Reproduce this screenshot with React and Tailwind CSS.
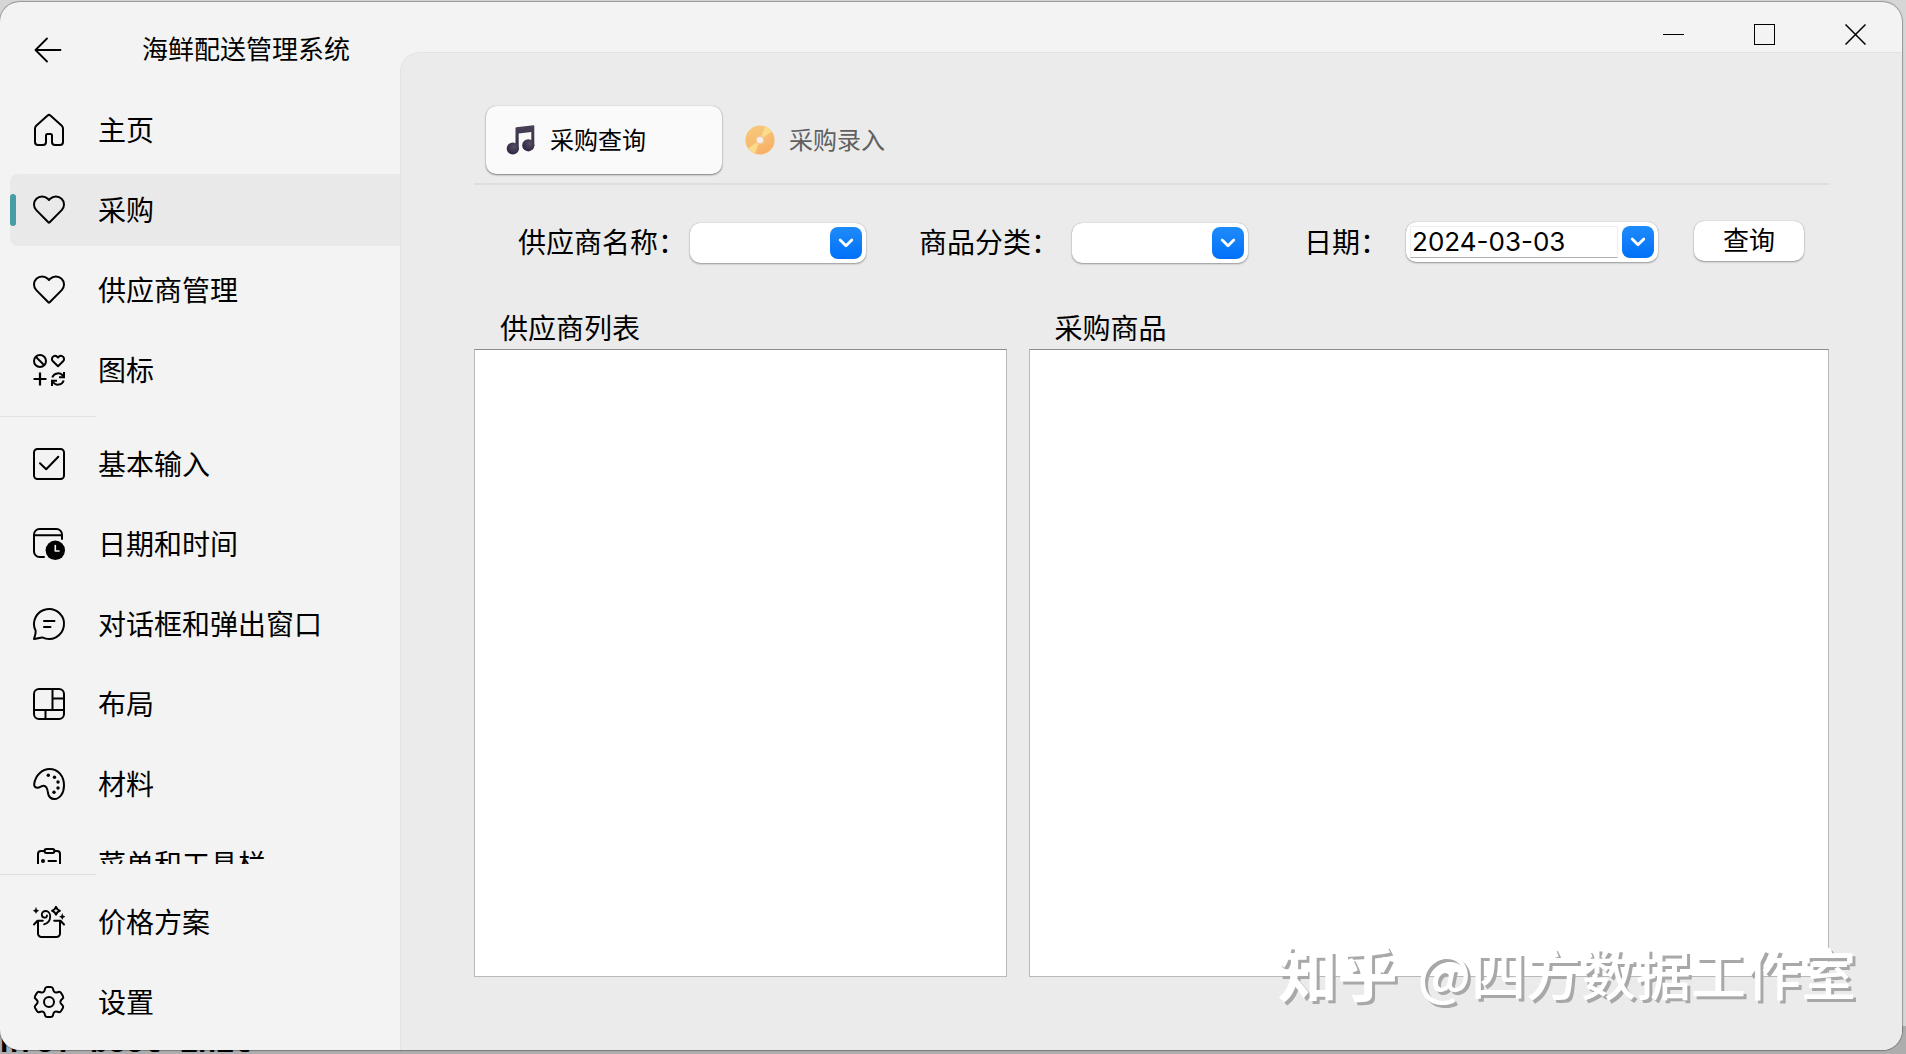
import React from "react";

const GEAR_PATH = (() => {
  const tooth = [
    [-4.6, -10.4],
    [-3.6, -15],
    [3.6, -15],
    [4.6, -10.4],
  ];
  const pts = [];
  for (let i = 0; i < 6; i++) {
    const a = (i * Math.PI) / 3;
    for (const [x, y] of tooth) {
      pts.push([
        16 + x * Math.cos(a) - y * Math.sin(a),
        16 + x * Math.sin(a) + y * Math.cos(a),
      ]);
    }
  }
  const toward = (p, q, r) => {
    const d = Math.hypot(q[0] - p[0], q[1] - p[1]);
    const t = Math.min(r, d / 2) / d;
    return `${(p[0] + (q[0] - p[0]) * t).toFixed(2)} ${(p[1] + (q[1] - p[1]) * t).toFixed(2)}`;
  };
  return (
    pts
      .map((p, i) => {
        const prev = pts[(i + pts.length - 1) % pts.length];
        const next = pts[(i + 1) % pts.length];
        return `${i ? "L" : "M"}${toward(p, prev, 1.8)}Q${p[0].toFixed(2)} ${p[1].toFixed(2)} ${toward(p, next, 1.8)}`;
      })
      .join("") + "Z"
  );
})();

function Icon({ children }) {
  return (
    <svg
      viewBox="0 0 32 32"
      className="size-8 shrink-0 overflow-visible"
      fill="none"
      stroke="black"
      strokeWidth="2"
      strokeLinecap="round"
      strokeLinejoin="round"
      aria-hidden="true"
    >
      {children}
    </svg>
  );
}

const HomeIcon = () => (
  <Icon>
    <path d="M14.6 1.6 3.2 11.7A4 4 0 0 0 2 14.7V28a3 3 0 0 0 3 3h5a3 3 0 0 0 3-3v-6.5a1.5 1.5 0 0 1 1.5-1.5h3a1.5 1.5 0 0 1 1.5 1.5V28a3 3 0 0 0 3 3h5a3 3 0 0 0 3-3V14.7a4 4 0 0 0-1.2-3L17.4 1.6a2 2 0 0 0-2.8 0Z" />
  </Icon>
);
const HeartIcon = () => (
  <Icon>
    <path d="m16 6-1.2-1.2A8 8 0 0 0 3.3 16.1l12 12.2a1 1 0 0 0 1.4 0l12-12.2A8 8 0 0 0 17.2 4.8L16 6Z" />
  </Icon>
);
const GlyphsIcon = () => (
  <Icon>
    <circle cx="7" cy="7" r="6" />
    <path d="m3 3 8 8" />
    <path d="m25 3.6-.8-.8a3.1 3.1 0 0 0-4.3 4.5L25 12.2l5.1-4.900a3.100 3.100 0 0 0-4.300-4.500L25 3.600Z" />
    <path d="M7 18.500v13M.5 25h13" strokeLinecap="butt" strokeWidth="2.200" />
    <path d="M19.300 23.500a6 6 0 0 1 10.700-1.500M30.700 26.500A6 6 0 0 1 20 28" strokeLinecap="butt" />
    <path d="M31 18v5.200h-5M19 32v-5.200h5" strokeLinecap="butt" strokeLinejoin="miter" />
  </Icon>
);
const CheckBoxIcon = () => (
  <Icon>
    <rect x="1" y="1" width="30" height="30" rx="3.500" />
    <path d="m7 15.200 6.200 6L25.300 8.800" />
  </Icon>
);
const CalendarIcon = () => (
  <Icon>
    <path d="M29 11V6.500A5.500 5.500 0 0 0 23.500 1h-17A5.500 5.500 0 0 0 1 6.500v17A5.500 5.500 0 0 0 6.500 29H11M1.500 7.300h27" />
    <circle cx="22.300" cy="22.300" r="9.700" fill="black" stroke="none" />
    <path d="M22.300 17.500V23H26" stroke="#f3f3f3" strokeWidth="1.600" />
  </Icon>
);
const ChatIcon = () => (
  <Icon>
    <path d="M2.700 22.900A15 15 0 1 1 9.300 29.400C6.500 29.900 3.800 30.500 1 31c.9-2.700 1.900-5.400 1.700-8.100ZM11 13h10.500M11 19h6.500" />
  </Icon>
);
const LayoutIcon = () => (
  <Icon>
    <rect x="1" y="1" width="30" height="30" rx="5" />
    <path d="M19.500 1v21M1 22h30M12.500 22v9M19.500 10.500H31" />
  </Icon>
);
const PaletteIcon = () => (
  <Icon>
    <path d="M1.200 16C2.400 6.500 10 1 16.500 1 25 1 31 8 31 17.500 31 25.500 26.500 31 21.500 31c-4 0-6-2.600-6.500-6-.5-4.500-1.500-7.200-4.500-7.200-2 0-3.500 2-6 2-2.200 0-3.500-1.500-3.300-3.800Z" />
    <g fill="black" stroke="none">
      <circle cx="15.300" cy="7.300" r="1.700" />
      <circle cx="21.500" cy="9.300" r="1.700" />
      <circle cx="25" cy="14" r="1.700" />
      <circle cx="25" cy="20" r="1.700" />
      <circle cx="21" cy="24.300" r="1.700" />
    </g>
  </Icon>
);
const ClipboardIcon = () => (
  <Icon>
    <rect x="11.500" y="1" width="10" height="4" rx="2" />
    <path d="M11.500 3H8a3 3 0 0 0-3 3v22a3 3 0 0 0 3 3h16a3 3 0 0 0 3-3V6a3 3 0 0 0-3-3h-2.500M15.500 13H23M15.500 22H23" />
    <circle cx="10" cy="13" r="2" fill="black" stroke="none" />
    <circle cx="10" cy="22" r="2" fill="black" stroke="none" />
  </Icon>
);
const GiftIcon = () => (
  <Icon>
    <path d="M5 16v11.500A3.500 3.500 0 0 0 8.500 31h15a3.500 3.500 0 0 0 3.500-3.500V16M1 18.500l3.500-3.800h5.300M31 18.500l-3.500-3.800h-6.300" />
    <path d="M11 18.300c3.600-1 6.200-4 6.200-7.800 0-3.300-1.900-5.500-4.500-5.500-2.200 0-3.900 1.500-3.900 3.600 0 1.800 1.200 3 2.800 3 1.400 0 2.400-.9 2.400-2.200" strokeWidth="1.800" />
    <path d="M23 .9c.7 2.200 1.600 3.100 3.800 3.900-2.200.7-3.100 1.600-3.800 3.800-.8-2.200-1.700-3.100-3.900-3.800C21.300 4 22.200 3.100 23 .9Z" />
    <path d="M3 2c.5 1.700 1 2.200 2.700 2.700C4 5.200 3.500 5.700 3 7.400 2.500 5.700 2 5.200.3 4.700 2 4.200 2.500 3.700 3 2ZM29.300 8c.4 1.700 1 2.200 2.700 2.700-1.700.5-2.300 1-2.700 2.700-.5-1.700-1-2.200-2.700-2.700 1.700-.5 2.200-1 2.700-2.700Z" fill="black" strokeWidth=".5" />
  </Icon>
);
const GearIcon = () => (
  <Icon>
    <path d={GEAR_PATH} />
    <circle cx="16" cy="16" r="5" />
  </Icon>
);

const MusicIcon = () => (
  <svg viewBox="0 0 30 30" className="size-[30px] shrink-0" aria-hidden="true">
    <defs>
      <linearGradient id="note" x1="0" y1="0" x2="0" y2="1">
        <stop offset="0" stopColor="#4b4058" />
        <stop offset="1" stopColor="#332c40" />
      </linearGradient>
      <radialGradient id="noteHead" cx=".6" cy=".35" r=".7">
        <stop offset="0" stopColor="#555061" />
        <stop offset="1" stopColor="#2d2142" />
      </radialGradient>
    </defs>
    <path d="M9.500 3.200a1 1 0 0 1 .9-1L27.400.2a.8.8 0 0 1 .9.8V21h-3V7l-12.600 1.600V25h-3.200Z" fill="url(#note)" />
    <circle cx="6.800" cy="23.500" r="6.100" fill="url(#noteHead)" />
    <circle cx="22.300" cy="20.300" r="6.100" fill="url(#noteHead)" />
  </svg>
);
const DiscIcon = () => (
  <svg viewBox="0 0 30 30" className="size-[30px] shrink-0" aria-hidden="true">
    <defs>
      <linearGradient id="disc" x1="0" y1="0" x2=".4" y2="1">
        <stop offset="0" stopColor="#f7cb7c" />
        <stop offset="1" stopColor="#f8b268" />
      </linearGradient>
    </defs>
    <circle cx="15" cy="15" r="14.600" fill="url(#disc)" />
    <path d="M15 15 20 1.300A14.600 14.600 0 0 1 27 6.500ZM15 15 3 23.500a14.600 14.600 0 0 0 7 5.300Z" fill="#fadb8c" />
    <circle cx="15" cy="15" r="4.500" fill="#f4c79a" />
    <circle cx="15" cy="15" r="3" fill="#f3f0ee" />
  </svg>
);

function NavItem({ icon: I, label, active }) {
  return (
    <a
      href="#"
      aria-current={active ? "page" : undefined}
      className={
        "relative ml-2.5 flex h-[72px] shrink-0 items-center gap-[33px] pl-[23px] text-[28px] leading-10 " +
        (active ? "rounded-l-lg bg-[#e9e9e9]" : "")
      }
    >
      {active && <span className="absolute top-5 left-0 h-8 w-1.5 rounded-full bg-[#479da6]" />}
      <I />
      <span className="pb-0.5 whitespace-nowrap">{label}</span>
    </a>
  );
}

function Chevron() {
  return (
    <span className="pointer-events-none absolute top-1 right-1 flex size-8 items-center justify-center rounded-lg bg-linear-to-b from-[#1e8bfb] to-[#0070f8]">
      <svg viewBox="0 0 16 10" className="h-2.5 w-4" fill="none" stroke="white" strokeWidth="2.800" strokeLinecap="round" strokeLinejoin="round" aria-hidden="true">
        <path d="m2.200 2 5.800 5.800L13.800 2" />
      </svg>
    </span>
  );
}

function Combo({ id, label }) {
  return (
    <>
      <label htmlFor={id} className="pb-0.5 whitespace-nowrap">
        {label}
      </label>
      <span className="relative mt-0.5 h-10 w-44 rounded-[10px] bg-white shadow-[0_0_1px_rgba(0,0,0,0.3),0_1px_2px_rgba(0,0,0,0.35)]">
        <select id={id} className="size-full appearance-none rounded-[10px] bg-transparent px-3" />
        <Chevron />
      </span>
    </>
  );
}

const mainNav = [
  { icon: HomeIcon, label: "主页" },
  { icon: HeartIcon, label: "采购", active: true },
  { icon: HeartIcon, label: "供应商管理" },
  { icon: GlyphsIcon, label: "图标" },
];
const scrollNav = [
  { icon: CheckBoxIcon, label: "基本输入" },
  { icon: CalendarIcon, label: "日期和时间" },
  { icon: ChatIcon, label: "对话框和弹出窗口" },
  { icon: LayoutIcon, label: "布局" },
  { icon: PaletteIcon, label: "材料" },
  { icon: ClipboardIcon, label: "菜单和工具栏" },
];
const footNav = [
  { icon: GiftIcon, label: "价格方案" },
  { icon: GearIcon, label: "设置" },
];

function Sidebar() {
  return (
    <aside className="flex w-[400px] shrink-0 flex-col overflow-hidden pb-3">
      <header className="flex h-[92px] shrink-0 items-center pl-8">
        <button type="button" aria-label="返回" className="mt-1 flex size-8 items-center justify-center">
          <svg viewBox="0 0 28 26" className="h-[26px] w-7" fill="none" stroke="black" strokeWidth="1.800" strokeLinecap="round" strokeLinejoin="round" aria-hidden="true">
            <path d="M13 1.500 1.500 13 13 24.500M2 13h24.500" />
          </svg>
        </button>
        <h1 className="ml-[78px] pb-px text-[26px] leading-10 whitespace-nowrap">海鲜配送管理系统</h1>
      </header>
      <nav className="flex min-h-0 flex-1 flex-col gap-2 overflow-hidden">
        {mainNav.map((n) => (
          <NavItem key={n.label} {...n} />
        ))}
        <hr className="mt-0.5 mb-[3px] w-24 shrink-0 border-[#e2e2e2]" />
        {scrollNav.map((n) => (
          <NavItem key={n.label} {...n} />
        ))}
      </nav>
      <hr className="mt-2.5 mb-[11px] w-24 border-[#dedede]" />
      <nav className="flex flex-col gap-2">
        {footNav.map((n) => (
          <NavItem key={n.label} {...n} />
        ))}
      </nav>
    </aside>
  );
}

function ListPanel({ title, grow }) {
  return (
    <section className={"flex min-w-0 flex-col " + grow}>
      <h2 className="pb-0.5 pl-[26px] leading-10">{title}</h2>
      <div className="flex-1 border border-[#b9b9b9] border-t-[#8c8c8c] bg-white" />
    </section>
  );
}

export default function App() {
  return (
    <div className="relative flex h-screen overflow-hidden bg-[#d6d6d6] pt-0.5 pr-1 pb-1 font-['Noto_Sans_CJK_SC',sans-serif] text-[28px] text-black">
      <div className="absolute inset-x-0 -bottom-2 h-9 bg-[#adadad]">
        <p className="font-['Liberation_Mono',monospace] text-[30px] leading-9 font-bold whitespace-pre">nfo: boot init</p>
      </div>
      <div className="relative flex min-w-0 flex-1 overflow-hidden rounded-[20px] bg-[#f3f3f3] shadow-[0_0_1px_1px_rgba(0,0,0,0.3)]">
        <Sidebar />
        <div className="flex min-w-0 flex-1 flex-col">
          <div className="flex h-[50px] shrink-0 items-start justify-end gap-[70px] pt-[22px] pr-9">
            <button type="button" aria-label="最小化" className="flex size-[21px] items-center">
              <span className="h-px w-full bg-black" />
            </button>
            <button type="button" aria-label="最大化" className="size-[21px] border border-black" />
            <button type="button" aria-label="关闭" className="size-[21px]">
              <svg viewBox="0 0 21 21" className="size-full" stroke="black" strokeWidth="1.500" aria-hidden="true">
                <path d="m.5.5 20 20m0-20-20 20" />
              </svg>
            </button>
          </div>
          <main className="flex min-h-0 flex-1 flex-col rounded-tl-[20px] border-t border-l border-[#e2e2e2] bg-[#ebebeb] pr-[73px] pb-[73px] pl-[73px]">
            <div role="tablist" className="flex items-center gap-[23px] border-b-2 border-[#dedede] pt-[53px] pb-[9px] pl-3 text-[24px] leading-9">
              <button type="button" role="tab" aria-selected="true" className="flex h-[68px] w-[236px] items-center gap-3.5 rounded-[10px] bg-[#fafafa] pl-5 shadow-[0_0_1px_rgba(0,0,0,0.3),0_1px_2px_rgba(0,0,0,0.45)]">
                <MusicIcon />
                <span className="pb-0.5">采购查询</span>
              </button>
              <button type="button" role="tab" aria-selected="false" className="flex h-[68px] items-center gap-3.5 text-[#606060]">
                <DiscIcon />
                <span className="pb-0.5">采购录入</span>
              </button>
            </div>
            <form className="flex shrink-0 items-start pt-9 pl-11 leading-10" onSubmit={(e) => e.preventDefault()}>
              <div className="flex items-center gap-1">
                <Combo id="supplier" label="供应商名称：" />
              </div>
              <div className="ml-[53px] flex items-center gap-[13px]">
                <Combo id="category" label="商品分类：" />
              </div>
              <div className="ml-14 flex items-center gap-[18px]">
                <label htmlFor="date" className="pb-0.5 whitespace-nowrap">日期：</label>
                <span className="relative flex h-10 w-[252px] items-center rounded-[10px] bg-white pl-1 shadow-[0_0_1px_rgba(0,0,0,0.3),0_1px_2px_rgba(0,0,0,0.35)]">
                  <input
                    id="date"
                    type="text"
                    defaultValue="2024-03-03"
                    className="h-8 w-[208px] border border-[#eeeeee] border-b-[#b0b0b0] bg-white pl-px font-['Inter','Liberation_Sans',sans-serif] text-[26px] outline-none"
                  />
                  <Chevron />
                </span>
              </div>
              <button type="submit" className="ml-9 flex h-10 w-[110px] items-center justify-center rounded-[10px] bg-white pb-1 text-[26px] leading-9 shadow-[0_0_1px_rgba(0,0,0,0.3),0_1px_2px_rgba(0,0,0,0.35)]">
                查询
              </button>
            </form>
            <div className="flex min-h-0 flex-1 gap-[22px] pt-11">
              <ListPanel title="供应商列表" grow="grow-[533] basis-0" />
              <ListPanel title="采购商品" grow="grow-[801] basis-0" />
            </div>
          </main>
        </div>
      </div>
      <p className="pointer-events-none absolute right-[50px] bottom-[43px] flex items-center gap-5 leading-[80px] whitespace-nowrap text-white [text-shadow:3px_3px_0_#a8a8a8]">
        <span className="text-[60px] font-bold">知乎</span>
        <span className="text-[55px] font-medium">@四方数据工作室</span>
      </p>
    </div>
  );
}
